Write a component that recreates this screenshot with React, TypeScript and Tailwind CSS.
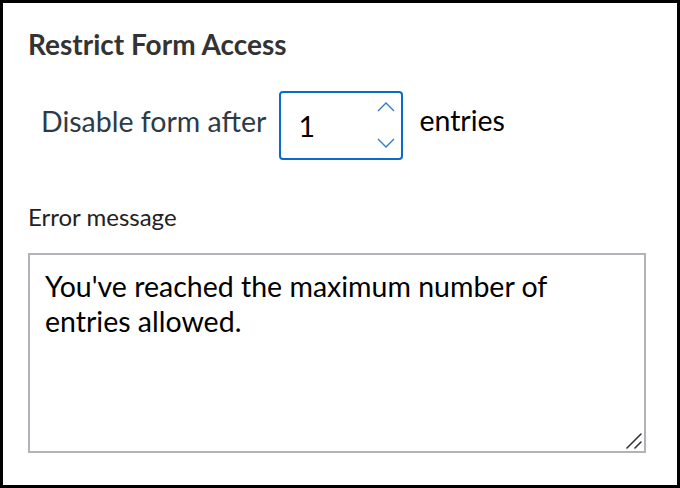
export default function App() {
  return (
    <div
      className="flex h-[488px] w-[680px] flex-col border-[3px] border-black bg-white pl-[25px] pr-[31px] text-[#2d3b45]"
      style={{ fontFamily: "Lato, 'Liberation Sans', sans-serif" }}
    >
      <h2 className="mt-[24px] text-[28px] font-bold leading-[34px] text-[#333]">Restrict Form Access</h2>

      <div className="mt-[30px] flex items-start">
        <span className="ml-[13px] mt-[9px] text-[28.5px] leading-[42px]">Disable form after</span>
        <div className="ml-[13px] flex h-[69px] w-[124px] items-center justify-between rounded-[4px] border-2 border-[#0b6bcb] pl-[17px] pr-[6px]">
          <span className="text-[28.5px] leading-[42px] text-black">1</span>
          <div className="flex h-full flex-col justify-between pb-[10px] pt-[9px]">
            <svg width="18" height="10" viewBox="0 0 18 10" fill="none" stroke="#2a7bd0" strokeWidth="1.3">
              <path d="M1 9 L9 1 L17 9" />
            </svg>
            <svg width="18" height="10" viewBox="0 0 18 10" fill="none" stroke="#2a7bd0" strokeWidth="1.3">
              <path d="M1 1 L9 9 L17 1" />
            </svg>
          </div>
        </div>
        <span className="ml-[16px] mt-[8px] text-[28.5px] leading-[42px] text-black">entries</span>
      </div>

      <label className="mt-[41px] text-[24px] leading-[32px] text-[#222]">Error message</label>

      <div className="relative mt-[20px]">
        <textarea
          className="block h-[200px] w-full resize-none border-2 border-[#b0b4b9] pl-[15px] pr-[36px] pt-[14px] text-[28.5px] leading-[35px] text-black outline-none"
          style={{ fontFamily: "Lato, 'Liberation Sans', sans-serif" }}
          defaultValue="You've reached the maximum number of entries allowed."
        />
        <svg
          className="pointer-events-none absolute bottom-[4px] right-[4px]"
          width="16"
          height="16"
          viewBox="0 0 16 16"
          fill="none"
          stroke="#333"
          strokeWidth="1.6"
          strokeLinecap="round"
        >
          <path d="M1 15 L15 1" />
          <path d="M9 15 L15 9" />
        </svg>
      </div>
    </div>
  )
}
